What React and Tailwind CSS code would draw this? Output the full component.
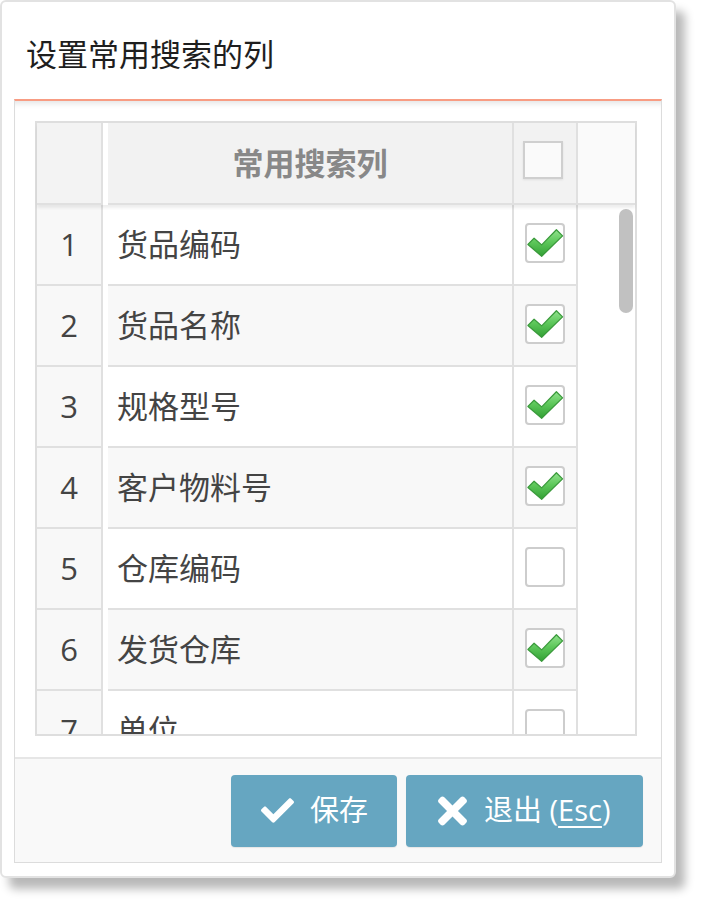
import { FaCheck, FaTimes } from 'react-icons/fa';

const columns = [
  { id: 1, name: '货品编码', checked: true },
  { id: 2, name: '货品名称', checked: true },
  { id: 3, name: '规格型号', checked: true },
  { id: 4, name: '客户物料号', checked: true },
  { id: 5, name: '仓库编码', checked: false },
  { id: 6, name: '发货仓库', checked: true },
  { id: 7, name: '单位', checked: false },
];

const GreenTick = () => (
  <svg viewBox="0 0 40 40" className="w-[38px] h-[38px] overflow-visible">
    <defs>
      <linearGradient id="tick-fill" x1="0" y1="0" x2="0" y2="1">
        <stop offset="0" stopColor="#92e28e" />
        <stop offset="0.45" stopColor="#5ec85b" />
        <stop offset="1" stopColor="#32a034" />
      </linearGradient>
    </defs>
    <path
      d="M2 21.5 L8.5 15 L16.5 22 L32 6 L38.5 12.5 L16.5 34 Z"
      fill="url(#tick-fill)"
      stroke="#3a9a3b"
      strokeWidth="1.3"
      strokeLinejoin="round"
    />
  </svg>
);

const CheckBox = ({ checked, header }) => (
  <div
    className={
      header
        ? 'w-[40px] h-[38px] border-2 border-[#cfcfcf] bg-[#fafafa] shadow-[0_1px_2px_rgba(0,0,0,0.08)]'
        : 'w-[40px] h-[40px] rounded-[4px] border-2 border-[#cdcdcd] bg-white flex items-center justify-center'
    }
  >
    {checked && <GreenTick />}
  </div>
);

const Row = ({ row, striped }) => {
  const bg = striped ? 'bg-[#f8f8f8]' : 'bg-white';
  return (
    <div className="flex h-[81px] shrink-0">
      <div className="w-[66px] bg-[#f8f8f8] border-r-2 border-b-2 border-[#e0e0e0] flex items-center justify-center text-[31px] text-[#444]">
        {row.id}
      </div>
      <div className="w-[5px] bg-white" />
      <div className={`w-[404px] ${bg} border-b-2 border-[#e0e0e0] flex items-center pl-[9px] text-[31px] text-[#444]`}>
        {row.name}
      </div>
      <div className={`w-[64px] ${bg} border-l-2 border-b-2 border-[#e0e0e0] flex items-center justify-center pb-[3px]`}>
        <CheckBox checked={row.checked} />
      </div>
      <div className="w-[59px] bg-white border-l-2 border-[#e0e0e0]" />
    </div>
  );
};

export default function App() {
  return (
    <div className="w-[706px] h-[911px] bg-white overflow-hidden font-['Open_Sans','Noto_Sans_CJK_SC',sans-serif]">
      <div className="w-[676px] h-[878px] rounded-[6px] border-2 border-[#e2e2e2] bg-white shadow-[9px_11px_10px_rgba(0,0,0,0.28)] flex flex-col">
        {/* title */}
        <div className="h-[97px] shrink-0 pl-[24px] pt-[7px] flex items-center text-[31px] leading-none text-[#1e1e1e]">
          设置常用搜索的列
        </div>

        <div className="mx-[12px] border-t-2 border-t-[#f89c83] border-x border-b border-[#dcdcdc] flex flex-col">
          {/* body */}
          <div className="h-[656px] px-[20px] pt-[20px] shadow-[inset_0_7px_6px_-5px_rgba(0,0,0,0.12)]">
            <div className="w-[602px] h-[615px] border-2 border-[#dedede] flex flex-col leading-none">
              <div className="flex h-[82px] shrink-0 relative z-10 shadow-[0_3px_3px_rgba(0,0,0,0.07)]">
                <div className="w-[66px] bg-[#f3f3f3] border-r-2 border-b-2 border-[#e0e0e0]" />
                <div className="w-[5px] bg-white" />
                <div className="w-[404px] bg-[#f2f2f2] border-b-2 border-[#e0e0e0] flex items-center justify-center text-[31px] font-bold text-[#888]">
                  常用搜索列
                </div>
                <div className="w-[64px] bg-[#f2f2f2] border-l-2 border-b-2 border-[#e0e0e0] flex items-center justify-center pr-[4px] pb-[6px]">
                  <CheckBox header />
                </div>
                <div className="w-[59px] bg-[#fafafa] border-l-2 border-b-2 border-[#e0e0e0]" />
              </div>

              <div className="relative flex-1 overflow-hidden flex flex-col">
                {columns.map((row, i) => (
                  <Row key={row.id} row={row} striped={i % 2 === 1} />
                ))}
                {/* scrollbar thumb */}
                <div className="absolute right-0 top-0 w-[19px] h-[110px] bg-white flex justify-center pt-[4px]">
                  <div className="w-[14px] h-[104px] rounded-full bg-[#c1c1c1]" />
                </div>
              </div>
            </div>
          </div>

          {/* footer */}
          <div className="h-[105px] border-t-2 border-[#e6e6e6] bg-[#f9f9f9] flex items-center justify-end pr-[18px] gap-[9px] text-white text-[29px] leading-none">
            <button className="w-[166px] h-[72px] rounded-[4px] bg-[#66a6c1] shadow-[0_1px_1px_rgba(0,0,0,0.08)] flex items-center pl-[30px] gap-[16px]">
              <FaCheck className="w-[33px] h-[33px]" />
              <span className="pb-[2px]">保存</span>
            </button>
            <button className="w-[237px] h-[72px] rounded-[4px] bg-[#66a6c1] shadow-[0_1px_1px_rgba(0,0,0,0.08)] flex items-center pl-[32px] gap-[17px]">
              <FaTimes className="w-[29px] h-[42px]" />
              <span className="pb-[2px]">
                退出 (<span className="underline underline-offset-[5px] decoration-2">Esc</span>)
              </span>
            </button>
          </div>
        </div>
      </div>
    </div>
  );
}
